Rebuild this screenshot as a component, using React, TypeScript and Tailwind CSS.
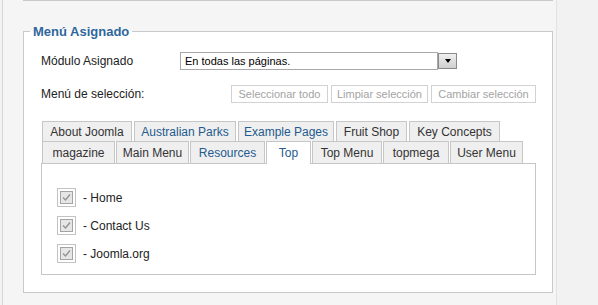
import React from 'react'

const row1 = [
  { label: 'About Joomla', w: 'w-[90px]', blue: false },
  { label: 'Australian Parks', w: 'w-[102px]', blue: true },
  { label: 'Example Pages', w: 'w-[96px]', blue: true },
  { label: 'Fruit Shop', w: 'w-[71px]', blue: false },
  { label: 'Key Concepts', w: 'w-[91px]', blue: false },
]

const row2 = [
  { label: 'magazine', w: 'w-[73px]', blue: false },
  { label: 'Main Menu', w: 'w-[73px]', blue: false },
  { label: 'Resources', w: 'w-[75px]', blue: true },
  { label: 'Top', w: 'w-[45px]', blue: true, active: true },
  { label: 'Top Menu', w: 'w-[70px]', blue: false },
  { label: 'topmega', w: 'w-[66px]', blue: false },
  { label: 'User Menu', w: 'w-[73px]', blue: false },
]

const items = ['- Home', '- Contact Us', '- Joomla.org']

const Checkbox = () => (
  <svg width="19" height="19" viewBox="0 0 19 19" className="shrink-0">
    <rect x="0.5" y="0.5" width="18" height="18" fill="#fff" stroke="#c2c2c2" />
    <rect x="3.5" y="3.5" width="12" height="12" fill="#e6e6e6" stroke="#a3a3a3" />
    <polyline points="6,9.5 8.5,12 13,6.5" fill="none" stroke="#959595" strokeWidth="1.5" />
  </svg>
)

const App = () => {
  return (
    <div className="w-[598px] h-[305px] bg-[#f2f2f2] overflow-hidden font-['Liberation_Sans',Arial,sans-serif] text-[#222]">
      <div className="ml-[2px] w-[555px] h-full bg-[#f5f5f5] border-l border-r border-l-[#d6d6d6] border-r-[#e2e2e2]">
        {/* bottom edge of the previous fieldset */}
        <div className="ml-[20px] w-[530px] h-px bg-[#c9c9c9]"></div>

        <fieldset className="ml-[20px] mt-[23px] w-[530px] border border-[#c9c9c9] bg-white">
          <legend className="ml-[6px] px-[3px] text-[13px] leading-[15px] font-bold text-[#2f679c]">
            Menú Asignado
          </legend>

          <div className="pl-[17px] pr-[16px] pb-[17px]">
            <div className="flex items-center h-[18px] mt-[13px]">
              <span className="w-[139px] text-[12px]">Módulo Asignado</span>
              <div className="flex h-[18px] w-[277px]">
                <div className="flex-1 border border-[#a8a8a8] flex items-center pl-[4px] text-[11px] text-black">
                  En todas las páginas.
                </div>
                <div className="w-[19px] h-[16px] mt-px border border-[#8a8a8a] bg-gradient-to-b from-[#f0f0f0] to-[#cfcfcf] flex items-center justify-center">
                  <div className="w-0 h-0 border-l-[3px] border-r-[3px] border-t-[4px] border-l-transparent border-r-transparent border-t-black"></div>
                </div>
              </div>
            </div>

            <div className="flex items-center h-[18px] mt-[15px]">
              <span className="text-[12px]">Menú de selección:</span>
              <div className="ml-auto flex gap-[3px] text-[11px] text-[#a3a3a3]">
                <div className="w-[97px] h-[18px] border border-[#d2d2d2] flex items-center justify-center">Seleccionar todo</div>
                <div className="w-[97px] h-[18px] border border-[#d2d2d2] flex items-center justify-center">Limpiar selección</div>
                <div className="w-[105px] h-[18px] border border-[#d2d2d2] flex items-center justify-center">Cambiar selección</div>
              </div>
            </div>

            <div className="mt-[18px] ml-px flex gap-[2px]">
              {row1.map((t) => (
                <div
                  key={t.label}
                  className={`${t.w} h-[20px] border border-b-0 border-[#c6c6c6] bg-[#efefef] flex items-center justify-center text-[12px] ${t.blue ? 'text-[#245b8e]' : 'text-[#333]'}`}
                >
                  {t.label}
                </div>
              ))}
            </div>
            <div className="ml-px flex gap-px relative z-10">
              {row2.map((t) => (
                <div
                  key={t.label}
                  className={`${t.w} border border-b-0 border-[#c6c6c6] flex items-center justify-center text-[12px] ${t.active ? 'h-[23px] -mb-px bg-white pb-px' : 'h-[22px] bg-[#efefef]'} ${t.blue ? 'text-[#245b8e]' : 'text-[#333]'}`}
                >
                  {t.label}
                </div>
              ))}
            </div>
            <div className="h-[112px] border border-[#c6c6c6] pt-[24px] pl-[15px] flex flex-col gap-[9px]">
              {items.map((it) => (
                <div key={it} className="flex items-center gap-[7px] h-[19px] text-[12px]">
                  <Checkbox />
                  <span>{it}</span>
                </div>
              ))}
            </div>
          </div>
        </fieldset>
      </div>
    </div>
  )
}

export default App
